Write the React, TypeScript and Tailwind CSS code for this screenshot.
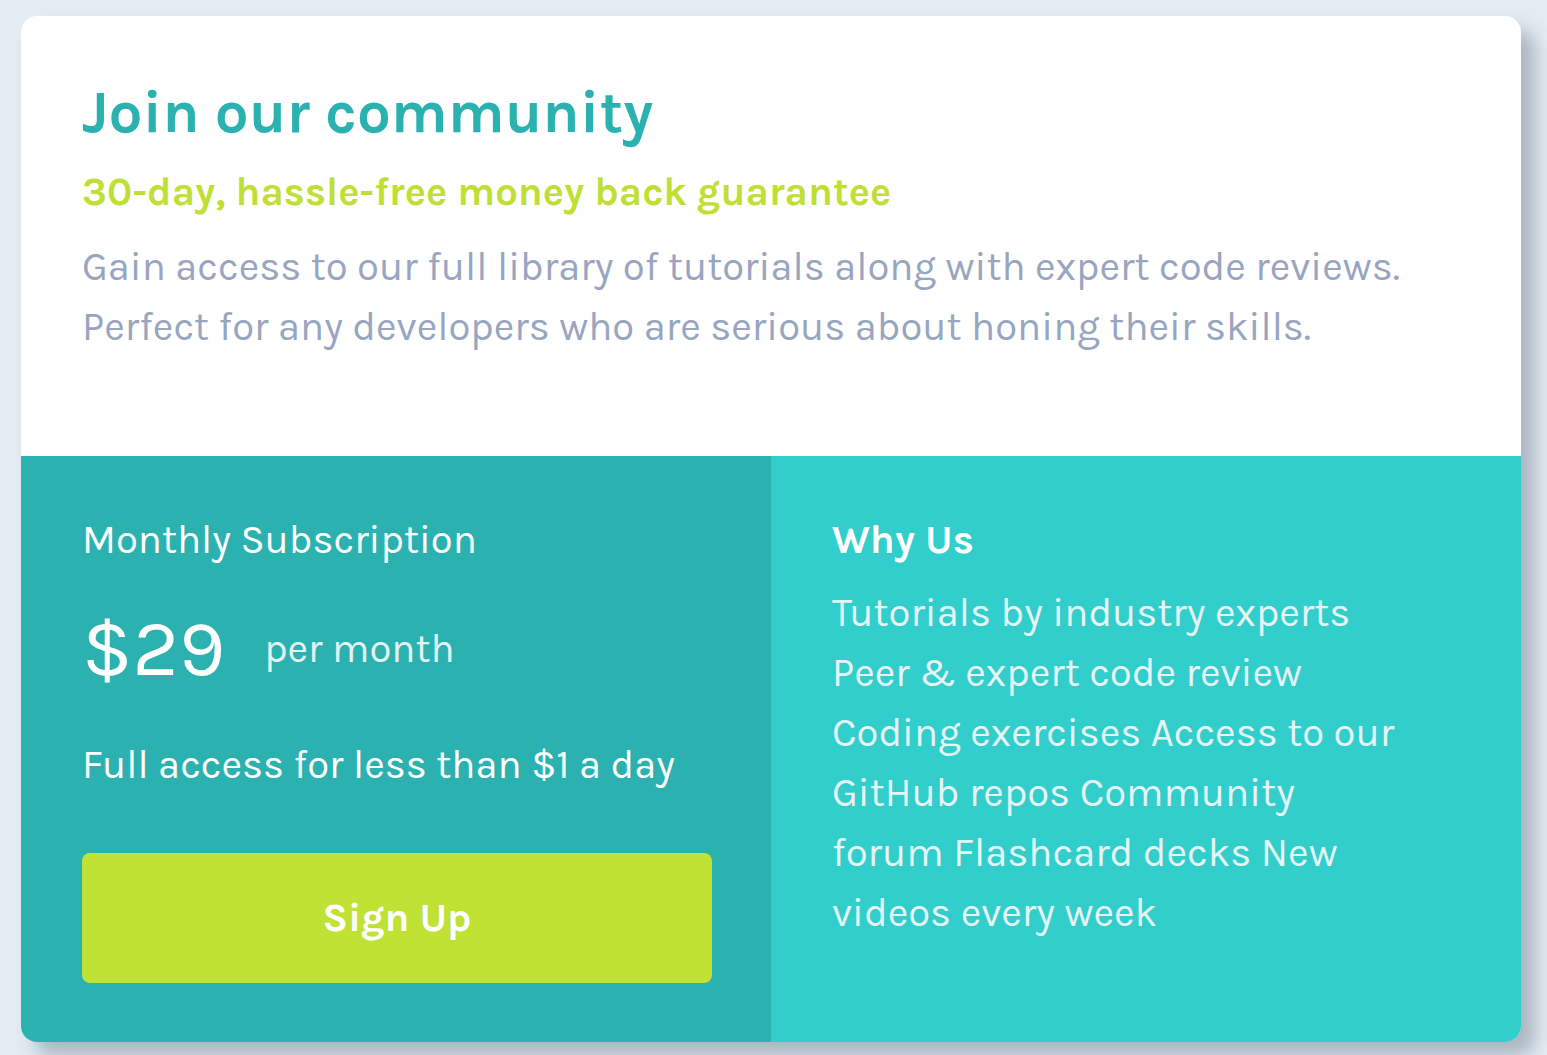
import React from "react";

export default function App() {
  const font = { fontFamily: "Karla, 'Roboto', 'Liberation Sans', sans-serif" };
  return (
    <div className="min-h-[1055px] w-full bg-[#e4ecf3] pl-[21px] pt-[16px]" style={font}>
      <div className="w-[1500px] overflow-hidden rounded-[16px] bg-white shadow-[14px_14px_18px_rgba(40,60,80,0.3)]">
        <div className="h-[440px] px-[61px] pt-[64px]">
          <h1 className="text-[60px] font-bold leading-[64px] text-[#2bb2b0]">Join our community</h1>
          <h2 className="mt-[26px] text-[40px] font-bold leading-[44px] text-[#c0df34]">30-day, hassle-free money back guarantee</h2>
          <p className="mt-[23px] text-[40px] leading-[60px] text-[#98a5c1]">
            Gain access to our full library of tutorials along with expert code reviews.
            <br />
            Perfect for any developers who are serious about honing their skills.
          </p>
        </div>
        <div className="grid h-[586px] grid-cols-2">
          <div className="bg-[#2bb2b0] px-[61px] pt-[62px] text-white">
            <h3 className="text-[40px] leading-[44px]">Monthly Subscription</h3>
            <div className="mt-[42px] flex items-center">
              <span className="text-[80px] leading-[90px]">$29</span>
              <span className="ml-[39px] text-[40px] leading-[44px] text-[#e4f2f3]">per month</span>
            </div>
            <p className="mt-[49px] text-[40px] leading-[44px]">Full access for less than $1 a day</p>
            <button className="mt-[66px] h-[130px] w-[630px] rounded-[8px] bg-[#bfe234] text-[40px] font-bold leading-[44px] text-white">
              Sign Up
            </button>
          </div>
          <div className="bg-[#31cecc] px-[61px] pt-[62px] text-white">
            <h3 className="text-[40px] font-bold leading-[44px]">Why Us</h3>
            <div className="mt-[21px] max-w-[572px] text-[40px] leading-[60px] text-[#e6f4f5]">
              <p>Tutorials by industry experts</p>
              <p>Peer &amp; expert code review</p>
              <p>Coding exercises Access to our GitHub repos Community forum Flashcard decks New videos every week</p>
            </div>
          </div>
        </div>
      </div>
    </div>
  );
}
